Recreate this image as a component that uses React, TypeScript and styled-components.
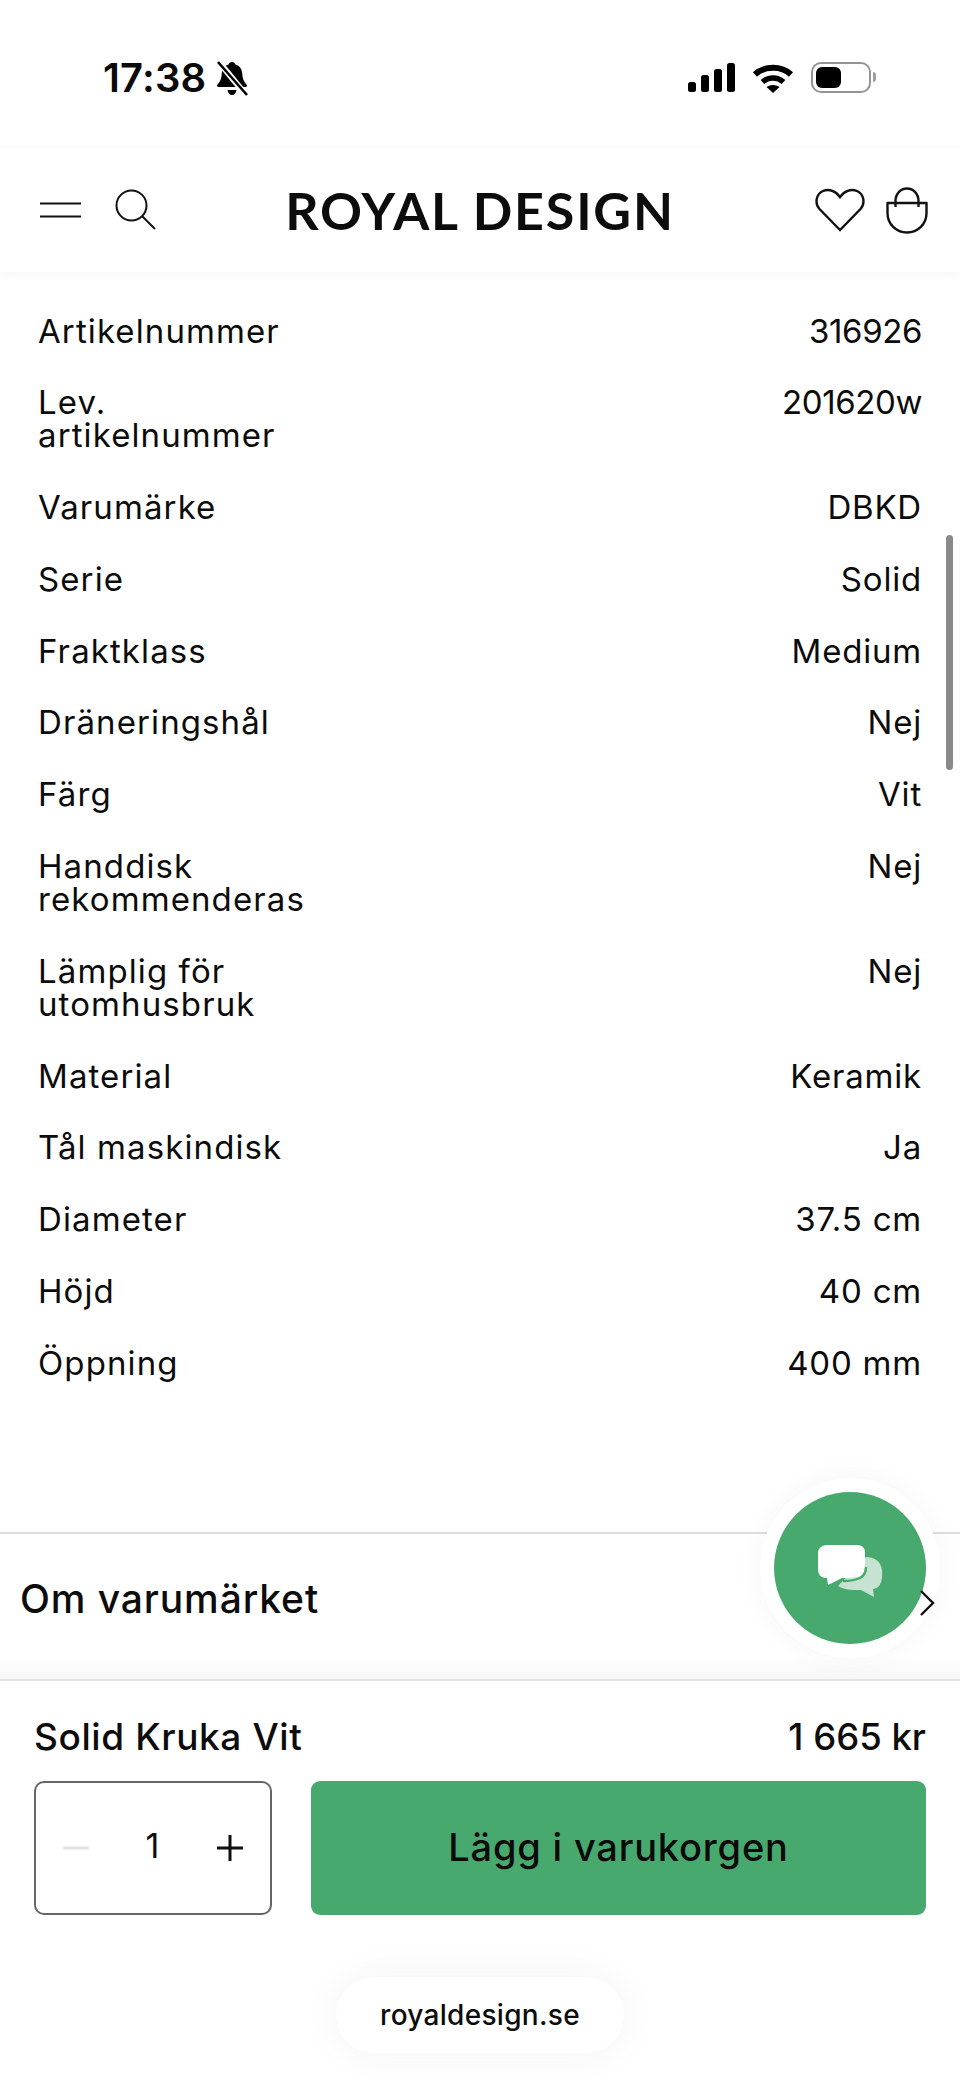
import styled, { createGlobalStyle } from "styled-components";

const specs: { label: string[]; value: string; numeric?: boolean }[] = [
  { label: ["Artikelnummer"], value: "316926", numeric: true },
  { label: ["Lev.", "artikelnummer"], value: "201620w", numeric: true },
  { label: ["Varumärke"], value: "DBKD" },
  { label: ["Serie"], value: "Solid" },
  { label: ["Fraktklass"], value: "Medium" },
  { label: ["Dräneringshål"], value: "Nej" },
  { label: ["Färg"], value: "Vit" },
  { label: ["Handdisk", "rekommenderas"], value: "Nej" },
  { label: ["Lämplig för", "utomhusbruk"], value: "Nej" },
  { label: ["Material"], value: "Keramik" },
  { label: ["Tål maskindisk"], value: "Ja" },
  { label: ["Diameter"], value: "37.5 cm" },
  { label: ["Höjd"], value: "40 cm" },
  { label: ["Öppning"], value: "400 mm" },
];

const GlobalStyle = createGlobalStyle`
  html, body {
    margin: 0;
    padding: 0;
    background: #fff;
  }
  body {
    font-family: "Inter", "Noto Sans", sans-serif;
    color: #0c0c0c;
  }
`;

const App = () => {
  return (
    <Page>
      <GlobalStyle />
      <StatusBar>
        <StatusLeft>
          <Time>17:38</Time>
          <svg width="32" height="35" viewBox="0 0 32 35">
            <path d="M16 1c2 0 3 1.200 3.400 2.600 4.600 1.200 6.600 5 6.900 9.400.2 4.500 1.400 7.600 4.200 10.400 1 1 .4 2.600-1 2.600H2.500c-1.400 0-2-1.600-1-2.600 2.800-2.800 4-5.900 4.200-10.400.3-4.400 2.300-8.200 6.900-9.400C13 2.200 14 1 16 1zM11.500 29h9c-.4 3-2.200 5-4.500 5s-4.100-2-4.500-5z" fill="#000" />
            <path d="M3 1l27 33" stroke="#fff" strokeWidth="6" />
            <path d="M2 1l29 33" stroke="#000" strokeWidth="2.600" />
          </svg>
        </StatusLeft>
        <StatusRight>
          <SignalBars>
            <Bar $height={10} />
            <Bar $height={17} />
            <Bar $height={23} />
            <Bar $height={29} />
          </SignalBars>
          <svg width="42" height="31" viewBox="0 0 42 31">
            <path d="M3 12.500C12.500 3.500 29.500 3.500 39 12.500" fill="none" stroke="#000" strokeWidth="6" />
            <path d="M10.500 20C16.500 14.500 25.500 14.500 31.500 20" fill="none" stroke="#000" strokeWidth="5.500" />
            <path d="M14.500 25c3.800-2.800 9.200-2.800 13 0L21 31z" fill="#000" />
          </svg>
          <Battery>
            <BatteryFill />
          </Battery>
        </StatusRight>
      </StatusBar>

      <NavBar>
        <NavIcons>
          <svg width="41" height="16" viewBox="0 0 41 16">
            <path d="M0 1.500h41M0 14.500h41" stroke="#111" strokeWidth="2" />
          </svg>
          <svg width="42" height="42" viewBox="0 0 42 42">
            <circle cx="16.500" cy="16.500" r="15" fill="none" stroke="#111" strokeWidth="2" />
            <path d="M27 27l13 13" stroke="#111" strokeWidth="2" />
          </svg>
        </NavIcons>
        <Logo>ROYAL DESIGN</Logo>
        <NavIconsRight>
          <svg width="50" height="44" viewBox="0 0 50 44">
            <path d="M25 42L4.500 21C-.5 15.500 1 6 8 3c6-2.500 13 0 17 6 4-6 11-8.500 17-6 7 3 8.500 12.500 3.500 18z" fill="none" stroke="#111" strokeWidth="2.400" strokeLinejoin="miter" />
          </svg>
          <svg width="42" height="47" viewBox="0 0 42 47">
            <path d="M1.500 16h39v10c0 11-8.500 19.500-19.500 19.500S1.500 37 1.500 26z" fill="none" stroke="#111" strokeWidth="2.400" strokeLinejoin="round" />
            <path d="M9.500 20v-6C9.500 7 14.500 1.500 21 1.500S32.500 7 32.500 14v6" fill="none" stroke="#111" strokeWidth="2.400" />
          </svg>
        </NavIconsRight>
      </NavBar>

      <SpecList>
        {specs.map(({ label, value, numeric }) => (
          <SpecRow key={label[0]}>
            <SpecLabel>
              {label.map((line) => (
                <span key={line}>{line}</span>
              ))}
            </SpecLabel>
            <SpecValue $numeric={numeric}>{value}</SpecValue>
          </SpecRow>
        ))}
      </SpecList>

      <AboutRow>
        <AboutTitle>Om varumärket</AboutTitle>
      </AboutRow>

      <BuyBar>
        <BuyHead>
          <BuyTitle>Solid Kruka Vit</BuyTitle>
          <BuyPrice>1 665 kr</BuyPrice>
        </BuyHead>
        <BuyControls>
          <Quantity>
            <QtySign>
              <svg width="26" height="4" viewBox="0 0 26 4">
                <path d="M0 2h26" stroke="#e4e4e4" strokeWidth="3" />
              </svg>
            </QtySign>
            <QtyValue>1</QtyValue>
            <QtySign>
              <svg width="28" height="28" viewBox="0 0 28 28">
                <path d="M1 14h26M14 1v26" stroke="#111" strokeWidth="3" />
              </svg>
            </QtySign>
          </Quantity>
          <AddButton>Lägg i varukorgen</AddButton>
        </BuyControls>
      </BuyBar>

      <UrlBar>
        <UrlPill>royaldesign.se</UrlPill>
      </UrlBar>

      <ScrollThumb />
      <ChatButton>
        <svg width="68" height="60" viewBox="0 -5 68 60">
          <path d="M50 14c9 0 15 5 16 13 .5 7 0 12-3 16-2 2-4 3-6 3l1 8-13-7c-10 0-17 0-23-4z" fill="#c6e3d1" />
          <path d="M12 2h29c5 0 8 3 8 7v14c0 6-3 10-8 11-6 1-11 1-15 1l-14 7-1-7c-6 0-9-3-9-9V10C2 5 6 2 12 2z" fill="#fff" />
          <path d="M27 38c6 0 13-1 17-3 4-2 6-6 6-11" fill="none" stroke="#48a96e" strokeWidth="2.500" />
        </svg>
      </ChatButton>
      <Chevron>
        <svg width="16" height="26" viewBox="0 0 16 26">
          <path d="M2 1l12 12L2 25" fill="none" stroke="#111" strokeWidth="2.400" />
        </svg>
      </Chevron>
    </Page>
  );
};

const Page = styled.div`
  position: relative;
  width: 960px;
  height: 2087px;
  overflow: hidden;
  background: #fff;
`;

const StatusBar = styled.div`
  display: flex;
  justify-content: space-between;
  align-items: flex-start;
  height: 88px;
  padding: 60px 89px 0 103px;
`;

const StatusLeft = styled.div`
  display: flex;
  align-items: center;
  gap: 10px;
`;

const Time = styled.div`
  font-size: 40px;
  font-weight: 600;
  line-height: 36px;
  letter-spacing: 0.2px;
  color: #0a0a0a;
`;

const StatusRight = styled.div`
  display: flex;
  align-items: center;
  gap: 17px;
  height: 34px;
`;

const SignalBars = styled.div`
  display: flex;
  align-items: flex-end;
  gap: 5px;
`;

const Bar = styled.div<{ $height: number }>`
  width: 8px;
  height: ${(p) => p.$height}px;
  border-radius: 2.5px;
  background: #000;
`;

const Battery = styled.div`
  position: relative;
  box-sizing: border-box;
  width: 60px;
  height: 31px;
  padding: 3px;
  border: 2px solid #949494;
  border-radius: 10px;

  &::after {
    content: "";
    position: absolute;
    right: -7px;
    top: 8px;
    width: 3px;
    height: 10px;
    border-radius: 0 3px 3px 0;
    background: #a0a0a0;
  }
`;

const BatteryFill = styled.div`
  width: 25px;
  height: 100%;
  border-radius: 6px;
  background: #000;
`;

const NavBar = styled.div`
  position: relative;
  z-index: 1;
  display: grid;
  grid-template-columns: 1fr auto 1fr;
  align-items: center;
  height: 124px;
  padding: 0 32px 0 40px;
  background: #fff;
  box-shadow: 0 3px 10px rgba(0, 0, 0, 0.035);
`;

const NavIcons = styled.div`
  display: flex;
  align-items: center;
  gap: 34px;
`;

const NavIconsRight = styled(NavIcons)`
  justify-content: flex-end;
  gap: 21px;
`;

const Logo = styled.div`
  font-family: "Lato", sans-serif;
  font-size: 52px;
  font-weight: 700;
  letter-spacing: 1.8px;
  line-height: 50px;
  margin-right: 8px;
  color: #0c0c0c;
`;

const SpecList = styled.div`
  display: flex;
  flex-direction: column;
  padding: 23px 38px 0 38px;
`;

const SpecRow = styled.div`
  display: flex;
  justify-content: space-between;
  padding: 19.5px 0 19.3px;
  font-size: 33px;
  line-height: 33px;
  letter-spacing: 1.1px;
`;

const SpecLabel = styled.div`
  display: flex;
  flex-direction: column;
`;

const SpecValue = styled.div<{ $numeric?: boolean }>`
  text-align: right;
  letter-spacing: ${(p) => (p.$numeric ? "-0.4px" : "0.8px")};
`;

const AboutRow = styled.div`
  display: flex;
  align-items: center;
  box-sizing: border-box;
  height: 149px;
  margin-top: 133px;
  padding: 0 20px 16px;
  border-top: 2px solid #dedede;
  border-bottom: 2px solid #e4e4e4;
  background: linear-gradient(#fff 85%, #f7f7f7);
`;

const AboutTitle = styled.div`
  font-size: 39px;
  font-weight: 500;
  line-height: 40px;
  letter-spacing: 0.9px;
`;

const BuyBar = styled.div`
  display: flex;
  flex-direction: column;
  gap: 24px;
  padding: 36px 34px 0;
`;

const BuyHead = styled.div`
  display: flex;
  justify-content: space-between;
  font-weight: 500;
  line-height: 40px;
`;

const BuyTitle = styled.div`
  font-size: 37px;
  letter-spacing: 0.6px;
`;

const BuyPrice = styled.div`
  font-size: 36.5px;
`;

const BuyControls = styled.div`
  display: flex;
  gap: 39px;
`;

const Quantity = styled.div`
  box-sizing: border-box;
  display: flex;
  align-items: center;
  justify-content: space-between;
  width: 238px;
  height: 134px;
  padding: 0 26px 0 27px;
  border: 2px solid #666;
  border-radius: 10px;
`;

const QtySign = styled.div`
  display: flex;
  align-items: center;
`;

const QtyValue = styled.div`
  font-size: 34px;
  line-height: 40px;
  margin-top: -4px;
`;

const AddButton = styled.div`
  flex: 1;
  display: flex;
  align-items: center;
  justify-content: center;
  height: 134px;
  padding-bottom: 2px;
  box-sizing: border-box;
  border-radius: 9px;
  background: #48a96e;
  font-size: 38px;
  font-weight: 500;
  letter-spacing: 0.8px;
  color: #0a0a0a;
`;

const UrlBar = styled.div`
  display: flex;
  justify-content: center;
  margin-top: 62px;
`;

const UrlPill = styled.div`
  display: flex;
  align-items: center;
  justify-content: center;
  width: 288px;
  height: 76px;
  border-radius: 38px;
  background: #fff;
  box-shadow: 0 0 40px rgba(0, 0, 0, 0.05);
  font-size: 28px;
  font-weight: 500;
  letter-spacing: 0.3px;
`;

const ScrollThumb = styled.div`
  position: absolute;
  left: 946px;
  top: 535px;
  width: 7px;
  height: 235px;
  border-radius: 4px;
  background: #8a8a8a;
`;

const ChatButton = styled.div`
  position: absolute;
  left: 774px;
  top: 1492px;
  display: flex;
  align-items: center;
  justify-content: center;
  width: 152px;
  height: 152px;
  border-radius: 50%;
  background: #48a96e;
  box-shadow: 0 0 0 14px #fff, 0 0 30px 14px rgba(0, 0, 0, 0.04);
`;

const Chevron = styled.div`
  position: absolute;
  left: 919px;
  top: 1590px;
  line-height: 0;
`;

export default App;
